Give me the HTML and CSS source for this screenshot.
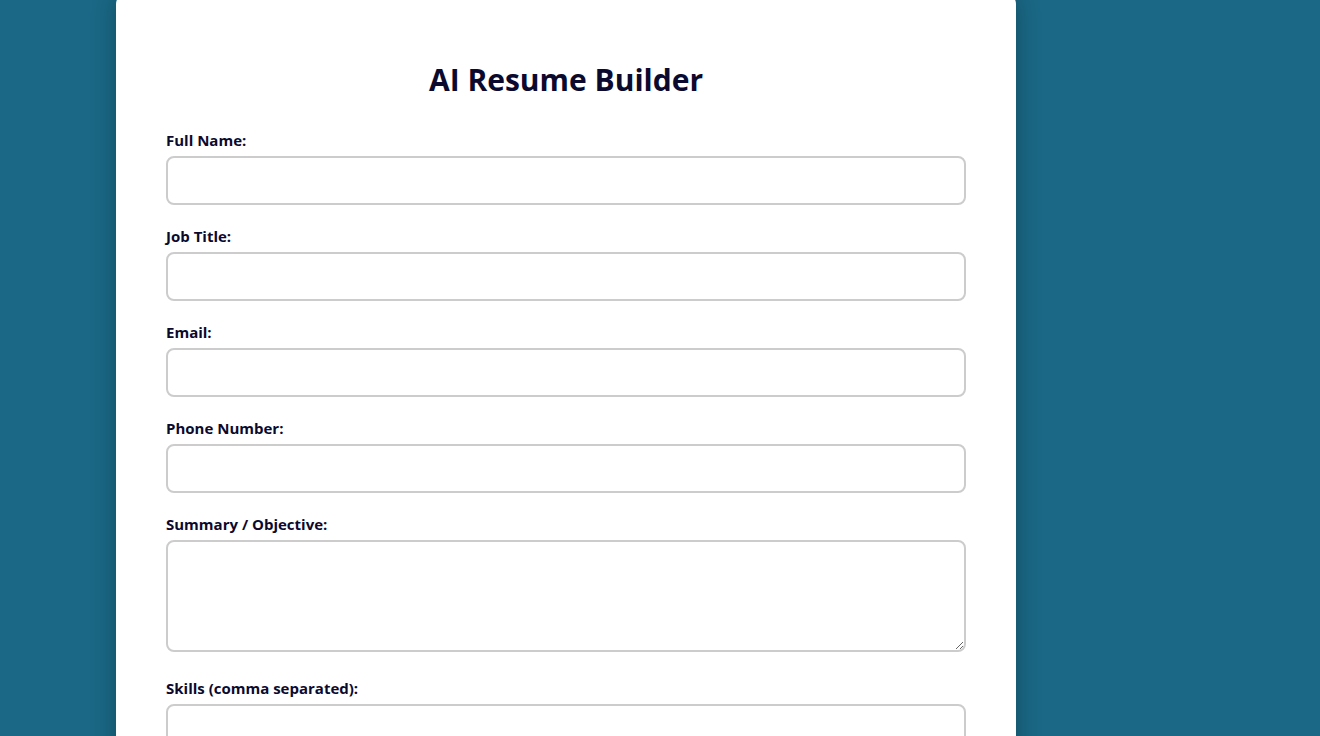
FILE: index.html
```html
<!DOCTYPE html>
<html lang="en">
<head>
<meta charset="utf-8">
<title>AI Resume Builder</title>
<link rel="stylesheet" href="styles.css">
</head>
<body>
<main class="card">
  <h1 class="title">AI Resume Builder</h1>
  <form class="form">
    <div class="field">
      <label class="label" for="name">Full Name:</label>
      <input class="input" id="name" type="text">
    </div>
    <div class="field">
      <label class="label" for="job">Job Title:</label>
      <input class="input" id="job" type="text">
    </div>
    <div class="field">
      <label class="label" for="email">Email:</label>
      <input class="input" id="email" type="email">
    </div>
    <div class="field">
      <label class="label" for="phone">Phone Number:</label>
      <input class="input" id="phone" type="tel">
    </div>
    <div class="field field-area">
      <label class="label" for="summary">Summary / Objective:</label>
      <textarea class="input textarea" id="summary"></textarea>
    </div>
    <div class="field">
      <label class="label" for="skills">Skills (comma separated):</label>
      <input class="input" id="skills" type="text">
    </div>
  </form>
</main>
</body>
</html>
```
FILE: styles.css
```css
html, body {
  margin: 0;
  padding: 0;
}
body {
  background: #1a6885;
  font-family: "Open Sans", "Noto Sans", sans-serif;
  color: #0b0a2e;
  height: 736px;
  overflow: hidden;
}
.card {
  width: 800px;
  margin: -6px 0 0 116px;
  padding: 60px 50px 40px;
  background: #fff;
  border-radius: 10px;
  box-shadow: 0 0 25px rgba(0, 0, 0, 0.28);
}
.title {
  margin: 0 0 24px;
  text-align: center;
  font-size: 30px;
  font-weight: 700;
  line-height: 52px;
}
.form {
  display: flex;
  flex-direction: column;
  gap: 21px;
}
.field {
  display: flex;
  flex-direction: column;
  gap: 6px;
}
.field-area {
  padding-bottom: 5px;
}
.label {
  font-size: 15px;
  font-weight: 700;
  line-height: 20px;
}
.input {
  box-sizing: border-box;
  width: 100%;
  height: 49px;
  border: 2px solid #cccccc;
  border-radius: 8px;
  font: inherit;
  padding: 10px;
  margin: 0;
  background: #fff;
}
.textarea {
  height: 112px;
  resize: vertical;
  display: block;
}
```
